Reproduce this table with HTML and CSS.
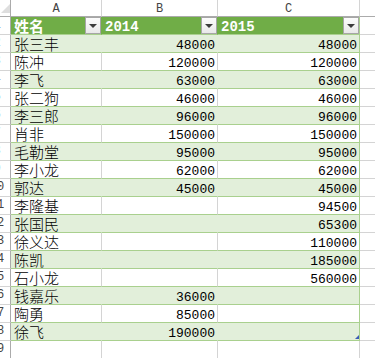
FILE: index.html
```html
<!DOCTYPE html>
<html lang="zh">
<head>
<meta charset="utf-8">
<title>Sheet</title>
<link rel="stylesheet" href="styles.css">
</head>
<body>
<div class="sheet">
  <div class="row colhead">
    <div class="corner"><svg width="9" height="9" viewBox="0 0 9 9"><polygon points="9,0 9,9 0,9" fill="#dedede"/></svg></div>
    <div class="ch">A</div>
    <div class="ch">B</div>
    <div class="ch">C</div>
    <div class="ch d"></div>
  </div>
  <div class="row t thead">
    <div class="rh"><span>1</span></div>
    <div class="c ca"><span class="hname">姓名</span><span class="dd"></span></div>
    <div class="c cb"><span class="hyear">2014</span><span class="dd"></span></div>
    <div class="c cc"><span class="hyear">2015</span><span class="dd"></span></div>
    <div class="d"></div>
  </div>
  <div class="row t band">
    <div class="rh"><span>2</span></div>
    <div class="c ca">张三丰</div><div class="c cb num">48000</div><div class="c cc num">48000</div><div class="d"></div>
  </div>
  <div class="row t">
    <div class="rh"><span>3</span></div>
    <div class="c ca">陈冲</div><div class="c cb num">120000</div><div class="c cc num">120000</div><div class="d"></div>
  </div>
  <div class="row t band">
    <div class="rh"><span>4</span></div>
    <div class="c ca">李飞</div><div class="c cb num">63000</div><div class="c cc num">63000</div><div class="d"></div>
  </div>
  <div class="row t">
    <div class="rh"><span>5</span></div>
    <div class="c ca">张二狗</div><div class="c cb num">46000</div><div class="c cc num">46000</div><div class="d"></div>
  </div>
  <div class="row t band">
    <div class="rh"><span>6</span></div>
    <div class="c ca">李三郎</div><div class="c cb num">96000</div><div class="c cc num">96000</div><div class="d"></div>
  </div>
  <div class="row t">
    <div class="rh"><span>7</span></div>
    <div class="c ca">肖非</div><div class="c cb num">150000</div><div class="c cc num">150000</div><div class="d"></div>
  </div>
  <div class="row t band">
    <div class="rh"><span>8</span></div>
    <div class="c ca">毛勒堂</div><div class="c cb num">95000</div><div class="c cc num">95000</div><div class="d"></div>
  </div>
  <div class="row t">
    <div class="rh"><span>9</span></div>
    <div class="c ca">李小龙</div><div class="c cb num">62000</div><div class="c cc num">62000</div><div class="d"></div>
  </div>
  <div class="row t band">
    <div class="rh"><span>10</span></div>
    <div class="c ca">郭达</div><div class="c cb num">45000</div><div class="c cc num">45000</div><div class="d"></div>
  </div>
  <div class="row t">
    <div class="rh"><span>11</span></div>
    <div class="c ca">李隆基</div><div class="c cb num"></div><div class="c cc num">94500</div><div class="d"></div>
  </div>
  <div class="row t band">
    <div class="rh"><span>12</span></div>
    <div class="c ca">张国民</div><div class="c cb num"></div><div class="c cc num">65300</div><div class="d"></div>
  </div>
  <div class="row t">
    <div class="rh"><span>13</span></div>
    <div class="c ca">徐义达</div><div class="c cb num"></div><div class="c cc num">110000</div><div class="d"></div>
  </div>
  <div class="row t band">
    <div class="rh"><span>14</span></div>
    <div class="c ca">陈凯</div><div class="c cb num"></div><div class="c cc num">185000</div><div class="d"></div>
  </div>
  <div class="row t">
    <div class="rh"><span>15</span></div>
    <div class="c ca">石小龙</div><div class="c cb num"></div><div class="c cc num">560000</div><div class="d"></div>
  </div>
  <div class="row t band">
    <div class="rh"><span>16</span></div>
    <div class="c ca">钱嘉乐</div><div class="c cb num">36000</div><div class="c cc num"></div><div class="d"></div>
  </div>
  <div class="row t">
    <div class="rh"><span>17</span></div>
    <div class="c ca">陶勇</div><div class="c cb num">85000</div><div class="c cc num"></div><div class="d"></div>
  </div>
  <div class="row t band">
    <div class="rh"><span>18</span></div>
    <div class="c ca">徐飞</div><div class="c cb num">190000</div><div class="c cc num last"></div><div class="d"></div>
  </div>
  <div class="row">
    <div class="rh"><span>19</span></div>
    <div class="c ca"></div><div class="c cb"></div><div class="c cc"></div><div class="d"></div>
  </div>
</div>
</body>
</html>
```

FILE: styles.css
```css
* {
  box-sizing: border-box;
  margin: 0;
  padding: 0;
}

html,
body {
  background: #ffffff;
}

body {
  width: 375px;
  height: 358px;
  overflow: hidden;
  font-family: "Noto Sans CJK SC", sans-serif;
}

.sheet {
  display: flex;
  flex-direction: column;
}

.row {
  display: grid;
  grid-template-columns: 11px 91px 116px 142px 1fr;
  height: 18px;
}

.row > div {
  border-right: 1px solid #d4d4d4;
  border-bottom: 1px solid #d4d4d4;
  overflow: hidden;
  white-space: nowrap;
}

.row > .d {
  border-right: none;
}

/* column header */
.row.colhead {
  height: 17px;
}

.colhead > div {
  display: flex;
  align-items: flex-end;
  justify-content: center;
  border-bottom-color: #ababab;
  font: 12px/14px "Liberation Mono", monospace;
  color: #444444;
}

.colhead > .corner {
  justify-content: flex-end;
  align-items: flex-end;
  border-right-color: #ababab;
  padding: 0 0 3px 0;
}

/* row header */
.row > .rh {
  border-right-color: #ababab;
  font: 12px/17px "Liberation Mono", monospace;
  color: #444444;
}

.rh span {
  display: block;
  width: 20px;
  margin-left: -13px;
  text-align: center;
}

/* cells */
.c {
  padding: 0 2px 0 3px;
  font-size: 15px;
  font-weight: 300;
  line-height: 17px;
  color: #000000;
}

.c.num {
  text-align: right;
  font-family: "Liberation Mono", monospace;
  font-size: 13px;
  font-weight: normal;
  padding-top: 2px;
}

/* table */
.t > .c {
  border-bottom-color: #a9d08e;
}

.t > .c.cc {
  border-right-color: #a9d08e;
}

.band > .c {
  background: #e2efda;
}

.band > .c.ca,
.band > .c.cb {
  border-right-color: #e2efda;
}

.thead > .c {
  display: flex;
  justify-content: space-between;
  padding-right: 0;
  background: #70ad47;
  color: #ffffff;
  font-weight: bold;
}

.thead > .c.ca,
.thead > .c.cb {
  border-right-color: #70ad47;
}

.hname {
  font-size: 15px;
  line-height: 17px;
}

.hyear {
  font-family: "Liberation Mono", monospace;
  font-size: 14px;
  line-height: 17px;
  padding-top: 2px;
}

.dd {
  flex: none;
  width: 16px;
  height: 17px;
  border: 1px solid #a6a6a6;
  background: linear-gradient(#fcfcfc, #e9e9e9);
  display: flex;
  align-items: center;
  justify-content: center;
}

.dd::after {
  content: "";
  border-left: 4px solid transparent;
  border-right: 4px solid transparent;
  border-top: 4px solid #3c3c3c;
}

.c.last {
  position: relative;
}

.c.last::after {
  content: "";
  position: absolute;
  right: 0;
  bottom: 1px;
  width: 0;
  height: 0;
  border-left: 4px solid transparent;
  border-bottom: 4px solid #3b5cb7;
}
```
